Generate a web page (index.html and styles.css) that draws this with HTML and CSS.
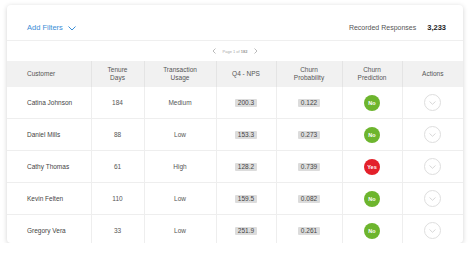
FILE: index.html
```html
<!DOCTYPE html>
<html>
<head>
<meta charset="utf-8">
<link rel="stylesheet" href="styles.css">
</head>
<body>
<div class="card">
  <div class="topbar">
    <div class="filters">Add Filters
      <svg class="chev" width="8" height="5" viewBox="0 0 8 5"><path d="M0.5 0.5 L4 4 L7.5 0.5" fill="none" stroke="#3b8ed6" stroke-width="1"/></svg>
    </div>
    <div class="recorded"><span class="rlabel">Recorded Responses</span><span class="rvalue">3,233</span></div>
  </div>
  <div class="pager">
    <svg width="4" height="6" viewBox="0 0 4 6"><path d="M3.5 0.5 L1 3 L3.5 5.5" fill="none" stroke="#aaa" stroke-width="0.8"/></svg>
    <span class="ptext">Page 1 of <b>182</b></span>
    <svg width="4" height="6" viewBox="0 0 4 6"><path d="M0.5 0.5 L3 3 L0.5 5.5" fill="none" stroke="#aaa" stroke-width="0.8"/></svg>
  </div>
  <table class="grid">
    <colgroup>
      <col class="c1"><col class="c2"><col class="c3"><col class="c4"><col class="c5"><col class="c6"><col class="c7">
    </colgroup>
    <thead>
      <tr>
        <th class="left">Customer</th>
        <th>Tenure<br>Days</th>
        <th>Transaction<br>Usage</th>
        <th>Q4 - NPS</th>
        <th>Churn<br>Probability</th>
        <th>Churn<br>Prediction</th>
        <th>Actions</th>
      </tr>
    </thead>
    <tbody>
      <tr>
        <td class="left">Catina Johnson</td><td>184</td><td>Medium</td>
        <td><span class="pill">200.3</span></td><td><span class="pill">0.122</span></td>
        <td><span class="dot no">No</span></td>
        <td><span class="act"><svg width="7" height="4" viewBox="0 0 7 4"><path d="M0.5 0.5 L3.5 3.3 L6.5 0.5" fill="none" stroke="#d4d4d4" stroke-width="0.9"/></svg></span></td>
      </tr>
      <tr>
        <td class="left">Daniel Mills</td><td>88</td><td>Low</td>
        <td><span class="pill">153.3</span></td><td><span class="pill">0.273</span></td>
        <td><span class="dot no">No</span></td>
        <td><span class="act"><svg width="7" height="4" viewBox="0 0 7 4"><path d="M0.5 0.5 L3.5 3.3 L6.5 0.5" fill="none" stroke="#d4d4d4" stroke-width="0.9"/></svg></span></td>
      </tr>
      <tr>
        <td class="left">Cathy Thomas</td><td>61</td><td>High</td>
        <td><span class="pill">128.2</span></td><td><span class="pill">0.739</span></td>
        <td><span class="dot yes">Yes</span></td>
        <td><span class="act"><svg width="7" height="4" viewBox="0 0 7 4"><path d="M0.5 0.5 L3.5 3.3 L6.5 0.5" fill="none" stroke="#d4d4d4" stroke-width="0.9"/></svg></span></td>
      </tr>
      <tr>
        <td class="left">Kevin Felten</td><td>110</td><td>Low</td>
        <td><span class="pill">159.5</span></td><td><span class="pill">0.082</span></td>
        <td><span class="dot no">No</span></td>
        <td><span class="act"><svg width="7" height="4" viewBox="0 0 7 4"><path d="M0.5 0.5 L3.5 3.3 L6.5 0.5" fill="none" stroke="#d4d4d4" stroke-width="0.9"/></svg></span></td>
      </tr>
      <tr>
        <td class="left">Gregory Vera</td><td>33</td><td>Low</td>
        <td><span class="pill">251.9</span></td><td><span class="pill">0.261</span></td>
        <td><span class="dot no">No</span></td>
        <td><span class="act"><svg width="7" height="4" viewBox="0 0 7 4"><path d="M0.5 0.5 L3.5 3.3 L6.5 0.5" fill="none" stroke="#d4d4d4" stroke-width="0.9"/></svg></span></td>
      </tr>
    </tbody>
  </table>
</div>
</body>
</html>
```
FILE: styles.css
```css
html, body {
  margin: 0;
  padding: 0;
  background: #ffffff;
}
body {
  font-family: "Liberation Sans", Arial, sans-serif;
  color: #444;
  padding: 5px 11px 0 7px;
}
.card {
  width: 456px;
  height: 238px;
  background: #fff;
  border-radius: 4px;
  box-shadow: 0 1px 5px rgba(0,0,0,0.18);
  overflow: hidden;
}
.topbar {
  height: 36px;
  box-sizing: border-box;
  border-bottom: 1px solid #efefef;
  display: flex;
  align-items: center;
  justify-content: space-between;
  padding: 10px 17px 0 20px;
}
.filters {
  color: #3b8ed6;
  font-size: 7.5px;
  display: flex;
  align-items: center;
  gap: 5px;
}
.chev { margin-top: 1px; }
.recorded {
  display: flex;
  align-items: center;
  gap: 11px;
}
.rlabel {
  font-size: 7px;
  color: #555;
}
.rvalue {
  font-size: 7.5px;
  font-weight: bold;
  color: #222;
}
.pager {
  height: 20px;
  display: flex;
  align-items: center;
  justify-content: center;
  gap: 5px;
  font-size: 4px;
  color: #aaa;
}
.pager b { font-weight: bold; color: #999; }
.ptext { font-size: 4px; padding: 0 2px; }
.grid {
  width: 456px;
  border-collapse: collapse;
  table-layout: fixed;
  font-size: 6.5px;
}
.c1 { width: 84px; }
.c2 { width: 53px; }
.c3 { width: 72px; }
.c4 { width: 60px; }
.c5 { width: 66px; }
.c6 { width: 60px; }
.c7 { width: 61px; }
.grid th {
  background: #f1f1f1;
  height: 26px;
  padding: 0;
  font-weight: normal;
  color: #555;
  font-size: 6.5px;
  line-height: 8.5px;
  text-align: center;
  border-left: 1px solid #e4e4e4;
}
.grid th:first-child, .grid td:first-child { border-left: none; }
.grid td {
  height: 31px;
  padding: 0;
  text-align: center;
  color: #555;
  border-left: 1px solid #eeeeee;
  border-top: 1px solid #eeeeee;
}
.grid tbody tr:first-child td { border-top: none; }
.grid .left {
  text-align: left;
  padding-left: 20px;
}
.grid td.left { color: #444; }
.pill {
  display: inline-block;
  background: #dcdcdc;
  color: #444;
  font-size: 6.5px;
  padding: 0 3px;
  line-height: 8px;
  border-radius: 1px;
}
.dot {
  display: inline-flex;
  align-items: center;
  justify-content: center;
  width: 16px;
  height: 16px;
  border-radius: 50%;
  color: #fff;
  font-size: 5.5px;
  font-weight: bold;
  vertical-align: middle;
}
.dot.no { background: #6db52e; }
.dot.yes { background: #e3202a; }
.act {
  display: inline-flex;
  align-items: center;
  justify-content: center;
  width: 15px;
  height: 15px;
  border: 1px solid #dedede;
  border-radius: 50%;
  vertical-align: middle;
}
.act svg { margin-top: 1px; }
```
